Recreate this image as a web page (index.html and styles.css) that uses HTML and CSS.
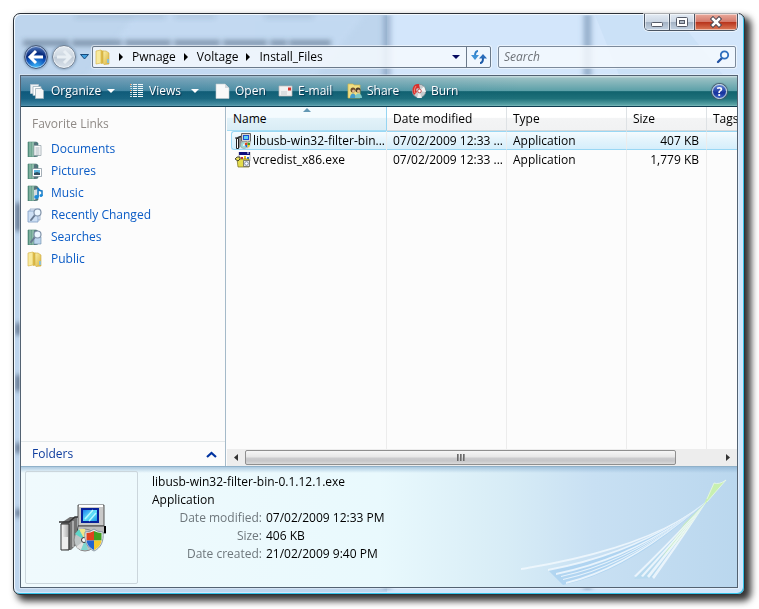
FILE: index.html
```html
<!DOCTYPE html>
<html lang="en">
<head>
<meta charset="utf-8">
<title>Install_Files</title>
<link rel="stylesheet" href="styles.css">
</head>
<body>
<svg class="defs" width="0" height="0" aria-hidden="true">
  <defs>
    <linearGradient id="book" x1="0" x2="1"><stop offset="0" stop-color="#4f8f7c"/><stop offset=".5" stop-color="#7db09b"/><stop offset="1" stop-color="#3f6d78"/></linearGradient>
    <linearGradient id="gold" x1="0" x2="1" y2="1"><stop offset="0" stop-color="#fbf0a8"/><stop offset="1" stop-color="#d9b23c"/></linearGradient>
    <linearGradient id="screen" x1="0" x2="1" y2="1"><stop offset="0" stop-color="#1d7ff0"/><stop offset=".5" stop-color="#5fe0f8"/><stop offset="1" stop-color="#1b9ae8"/></linearGradient>
    <linearGradient id="grey" x1="0" x2="1"><stop offset="0" stop-color="#fff"/><stop offset="1" stop-color="#a8a8a8"/></linearGradient>
    <symbol id="i-book" viewBox="0 0 16 16">
      <path d="M1 1h8l2 1v13l-3 1H1z" fill="url(#book)" stroke="#4b7f73" stroke-width=".6"/>
      <path d="M3 1v14.500M6 1v14.500" stroke="#a9cfc0" stroke-width=".8"/>
      <path d="M7 2l3-1v14l-3 1z" fill="#57717c"/>
    </symbol>
    <symbol id="i-folder" viewBox="0 0 16 16">
      <path d="M1 2l5-1v13l-5 1z" fill="#f8ea9d" stroke="#d8b750" stroke-width=".7"/>
      <path d="M6 1l3 1v12l-3 1z" fill="#dcb947"/>
      <path d="M8 2h3l3 2v11l-5 .500-1-1z" fill="url(#gold)" stroke="#cfa93e" stroke-width=".6"/>
      <path d="M12 10h2v4h-2z" fill="#8fc0cf"/>
    </symbol>
    <symbol id="i-glass" viewBox="0 0 16 16">
      <path d="M8 8l-4 5" stroke="#66788f" stroke-width="2" stroke-linecap="round"/>
      <circle cx="10.500" cy="5.500" r="3.500" fill="#edf7ff" stroke="#8193aa" stroke-width="1.200"/>
    </symbol>
    <symbol id="i-setup" viewBox="0 0 48 48">
      <path d="M20 1h26v21H20z" fill="#c9c9c9" stroke="#555"/>
      <path d="M21 2h24" stroke="#fff" stroke-width="2"/>
      <path d="M23 4h18v15H23z" fill="#07219b"/>
      <path d="M25 6h14v11H25z" fill="url(#screen)"/>
      <path d="M27 15l8-9M31 17l7-8" stroke="#b6f7ff" stroke-width="1.500"/>
      <path d="M20 22h26l2 2v5H19z" fill="#bdbdbd" stroke="#444"/>
      <path d="M47 22v7" stroke="#000" stroke-width="2"/>
      <path d="M3 19l9-6h7v27l-6 6H3z" fill="#717171"/>
      <path d="M1 18h10l6-5h3" stroke="#333" stroke-width="1.500" fill="none"/>
      <path d="M3 20h8v26H3z" fill="url(#grey)" stroke="#333"/>
      <path d="M15 17v26" stroke="#aaa" stroke-width="2"/>
      <path d="M4 33h6v12H4z" fill="#eee"/>
      <circle cx="27" cy="36" r="11" fill="#bfc5c6" stroke="#888"/>
      <path d="M27 36L17 30l4-5z" fill="#5fd5c8"/><path d="M27 36L21 25l6 0z" fill="#efe789"/>
      <path d="M27 36l-9 7 5 3z" fill="#e2e2e2"/><path d="M27 36l-4 10h7z" fill="#7ed7d0"/>
      <circle cx="26" cy="36" r="2.500" fill="#fff" stroke="#333"/>
      <path d="M27 28q6 0 9-3 3 3 9 3c1 9-2 16-9 19-7-3-10-10-9-19z" fill="#e6edf0" stroke="#8d9aa5"/>
      <path d="M28.500 29q4 0 7.500-2v9.500h-7.500z" fill="#e0421e"/><path d="M36 27q4 2 7.500 2v7.500H36z" fill="#3f9f20"/>
      <path d="M28.500 36.500H36V46c-4-2-7-5-7.500-9.500z" fill="#2165d2"/><path d="M36 36.500h7.500C43 41 40 44 36 46z" fill="#f4c92e"/>
    </symbol>
    <symbol id="i-setup-small" viewBox="0 0 16 16">
      <path d="M6.500.500h9v8h-9z" fill="#d4d4d4" stroke="#666"/>
      <path d="M8 2h6v5H8z" fill="#1b4fd0"/><path d="M9 3h4v3H9z" fill="#5fd2f4"/>
      <path d="M1 5l3-2h2v10l-2 2H1z" fill="#666"/><path d="M1.500 5.500h2v10h-2z" fill="#fff" stroke="#222"/><path d="M5 5v9" stroke="#bbb"/>
      <path d="M0 5h3l3-2" stroke="#222" fill="none"/>
      <path d="M6 8.500h10v2H6z" fill="#bbb"/>
      <circle cx="9" cy="12" r="3.500" fill="#9edbd6" stroke="#999" stroke-width=".6"/><circle cx="9" cy="12" r="1" fill="#fff"/>
      <path d="M9.500 9.500q2 0 3-1 1 1 3 1c0 3-1 5-3 6-2-1-3-3-3-6z" fill="#fff" stroke="#bbb" stroke-width=".4"/>
      <path d="M10 10l2.500-.8V12H10z" fill="#e0421e"/><path d="M12.500 9.200L15 10v2h-2.500z" fill="#3f9f20"/><path d="M10 12h2.500v3Q10 14 10 12z" fill="#2165d2"/><path d="M12.500 12H15q0 2-2.500 3z" fill="#f4c92e"/>
    </symbol>
    <symbol id="i-redist" viewBox="0 0 16 16">
      <path d="M4 0h11v9H4z" fill="#fff" stroke="#777" stroke-width=".5"/><path d="M4 0h11v3H4z" fill="#10107c"/>
      <path d="M12 1h2" stroke="#fff"/><path d="M6 5h2v2H6z" fill="#d03030"/><path d="M9 4h2v3H9z" fill="#e2bd16"/><path d="M12 5h2v2h-2z" fill="#3078c8"/>
      <path d="M2 7h12v8H3z" fill="#e4dc4c" stroke="#756c19" stroke-width=".7"/>
      <path d="M0 7l2-2h3v2l-2 2z" fill="#e9e15a" stroke="#222" stroke-width=".8"/>
      <path d="M8.500 8.500h6v6h-6z" fill="#e8e8e8" stroke="#555" stroke-width=".7"/><circle cx="11.500" cy="11.500" r="1.800" fill="#fff" stroke="#679" stroke-width=".8"/>
    </symbol>
  </defs>
</svg>

<main class="window">
  <svg class="glass" aria-hidden="true">
    <defs><filter id="soft" x="-20%" y="-100%" width="140%" height="300%"><feGaussianBlur stdDeviation="2.500"/></filter>
    <filter id="soft2" x="-300%" y="-5%" width="700%" height="110%"><feGaussianBlur stdDeviation="3 1"/></filter></defs>
    <rect width="372" height="100%" fill="#a9c4df" opacity=".5"/>
    <path d="M120 0h230l-60 75H60z" fill="#c6dcf4" opacity=".6" filter="url(#soft)"/>
    <g filter="url(#soft)" fill="#41566e">
      <path d="M8 25h46v6H8zM57 25h50v6H57zM110 25h46v6h-46zM159 25h46v6h-46zM208 25h44v6h-44zM255 25h17v6h-17zM274 25h42v6h-42z" opacity=".5"/>
      <path d="M60 0h90v3H60zM160 0h40v3h-40zM250 0h48v3h-48z" opacity=".2"/>
      <path d="M0 188h7v28H0zM0 308h7v12H0zM0 360h7v16H0zM0 428h7v10H0zM0 494h7v8H0z" opacity=".7"/>
    </g>
    <g filter="url(#soft2)" fill="#5b7b9e"><path d="M370 0h4v575h-4z" opacity=".8"/><path d="M570 0h5v575h-5z" opacity=".8"/></g>
    <path d="M580 0h80l60 75H610z" fill="#c3dbf3" opacity=".5"/>
  </svg>

  <header class="titlebar">
    <div class="caption">
      <button class="cap" aria-label="Minimize"><svg width="14" height="14" viewBox="0 0 14 14"><rect x="1.500" y="7.500" width="11" height="4" rx="1" fill="#fff" stroke="#555b68"/></svg></button>
      <button class="cap" aria-label="Maximize"><svg width="14" height="14" viewBox="0 0 14 14"><rect x="1.500" y="2.500" width="11" height="9" rx="1" fill="#fff" stroke="#555b68"/><rect x="4.500" y="5.500" width="5" height="3" fill="#aeb8c4" stroke="#555b68"/></svg></button>
      <button class="cap close" aria-label="Close"><svg width="14" height="14" viewBox="0 0 14 14"><path d="M4 4l6 6M10 4l-6 6" stroke="#4f4b55" stroke-width="4.500" stroke-linecap="square"/><path d="M4 4l6 6M10 4l-6 6" stroke="#fff" stroke-width="2.500" stroke-linecap="square"/></svg></button>
    </div>
  </header>

  <div class="navrow">
    <button class="round back" aria-label="Back"><svg width="18" height="18" viewBox="0 0 18 18"><path d="M9 3L3 9l6 6M4 9h12" fill="none" stroke="#fff" stroke-width="3"/></svg></button>
    <button class="round forward" aria-label="Forward"><svg width="18" height="18" viewBox="0 0 18 18"><path d="M9 3l6 6-6 6M14 9H2" fill="none" stroke="#e9eff4" stroke-width="3"/></svg></button>
    <button class="recent" aria-label="Recent pages"><svg width="9" height="6" viewBox="0 0 9 6"><path d="M.5.500h8L4.500 5z" fill="#3fa0e0" stroke="#17497c"/></svg></button>
    <nav class="address" aria-label="Address">
      <svg class="icon" aria-hidden="true"><use href="#i-folder"/></svg>
      <span class="sep"></span><a href="#">Pwnage</a>
      <span class="sep"></span><a href="#">Voltage</a>
      <span class="sep"></span><a href="#">Install_Files</a>
      <button class="drop" aria-label="Previous locations"><svg width="8" height="4" viewBox="0 0 8 4"><path d="M0 0h8L4 4z" fill="#050a60"/></svg></button>
      <button class="refresh" aria-label="Refresh"><svg width="16" height="14" viewBox="0 0 16 14"><path d="M7 1Q4 1 4 6" fill="none" stroke="#2f7fc8" stroke-width="2"/><path d="M0 5h8L4 10z" fill="#3f92d6"/><path d="M9 13q3 0 3-5" fill="none" stroke="#1d5ba8" stroke-width="2"/><path d="M8 8.500h8L12 4z" fill="#2a6cba"/></svg></button>
    </nav>
    <div class="search">
      <input type="search" placeholder="Search" aria-label="Search">
      <svg width="14" height="14" viewBox="0 0 14 14" aria-hidden="true"><path d="M6 8l-4 4" stroke="#2353a3" stroke-width="2.400" stroke-linecap="round"/><circle cx="8.500" cy="5" r="3.700" fill="#f4faff" stroke="#2e6ebd" stroke-width="1.800"/></svg>
    </div>
  </div>

  <div class="client">
    <div class="toolbar" role="toolbar">
      <button class="tool w-organize"><svg class="icon" viewBox="0 0 16 16"><path d="M1.500 1.500h8v9h-8z" fill="#eef1f4" stroke="#b9c7d0" stroke-width=".8"/><path d="M4 3.500h8v9H4z" fill="#fff" stroke="#9fb2bd" stroke-width=".8"/><path d="M6.500 5.500h6l2 2v8h-8z" fill="#f6f6f6" stroke="#9fb2bd" stroke-width=".8"/></svg>Organize<span class="caret"></span></button>
      <button class="tool w-views"><svg class="icon" viewBox="0 0 16 16"><path d="M1 1.500h2M1 3.500h2M1 5.500h2M1 7.500h2M1 9.500h2M1 11.500h2M1 13.500h2" stroke="#d6dfdc"/><path d="M1 1.500h1M1 7.500h1" stroke="#f08a50"/><path d="M1 5.500h1M1 11.500h1" stroke="#75c7ee"/><path d="M4 1.500h4M4 3.500h4M4 5.500h4M4 7.500h4M4 9.500h4M4 11.500h4M4 13.500h4M9 1.500h5M9 3.500h5M9 5.500h5M9 7.500h5M9 9.500h5M9 11.500h5M9 13.500h5" stroke="#f2f7f8"/></svg>Views<span class="caret"></span></button>
      <button class="tool w-open"><svg class="icon" viewBox="0 0 16 16"><path d="M1 1h9l4 4v10.500H1z" fill="#f9f9f9" stroke="#bfc9ce" stroke-width=".6"/><path d="M10 1v4h4z" fill="#d3d8dc"/></svg>Open</button>
      <button class="tool w-mail"><svg class="icon" viewBox="0 0 16 16"><path d="M1 3h13v10H1z" fill="#f2f2f2" stroke="#c0b8b8" stroke-width=".7"/><path d="M10 4.500h3v3h-3z" fill="#d8322c"/><path d="M3 9h6M3 11h6" stroke="#c5cbd0"/></svg>E-mail</button>
      <button class="tool w-share"><svg class="icon" viewBox="0 0 16 16"><path d="M1 1h5l1 1h6v13H1z" fill="#f0de83" stroke="#cfb44b" stroke-width=".7"/><circle cx="6" cy="7" r="2.500" fill="#6d4b2a"/><circle cx="11" cy="7" r="2.500" fill="#4d3a28"/><circle cx="6.500" cy="8" r="1.500" fill="#e3b98f"/><circle cx="11.500" cy="8" r="1.500" fill="#e3b98f"/><path d="M3 15c0-6 6-6 6 0z" fill="#459bcb"/><path d="M8 15c0-6 7-6 7 0z" fill="#7dc7c7"/></svg>Share</button>
      <button class="tool"><svg class="icon" viewBox="0 0 16 16"><circle cx="8" cy="8" r="6.800" fill="#c7cbce" stroke="#76858c" stroke-width=".7"/><path d="M8 8l5-4.500L15 9z" fill="#f5f5f5"/><path d="M8 8l-2 7 5 0z" fill="#efefef"/><path d="M8 1C2 0 0 7 3 12l3-3c-2-3 0-5 3-3z" fill="#d8302c"/><path d="M5 3c-2 3-2 5-1 7" stroke="#f58c78" fill="none"/><circle cx="8.500" cy="8" r="1.800" fill="#fff" stroke="#b33" stroke-width=".8"/></svg>Burn</button>
      <button class="help" aria-label="Help"><span>?</span></button>
    </div>

    <div class="content">
      <aside class="sidebar">
        <h2>Favorite Links</h2>
        <ul>
          <li><a href="#"><svg class="icon" viewBox="0 0 16 16"><use href="#i-book"/><path d="M7 4.500h7v10H7z" fill="#fafafa" stroke="#8d9ba3" stroke-width=".7"/><path d="M8.500 7h4M8.500 9h4M8.500 11h4M8.500 13h4" stroke="#96a4ae" stroke-width=".8"/></svg>Documents</a></li>
          <li><a href="#"><svg class="icon" viewBox="0 0 16 16"><use href="#i-book"/><path d="M5.500 5.500h9v8h-9z" fill="#fff" stroke="#7e8c98" stroke-width=".7"/><path d="M7 7h6v5H7z" fill="#5bb4df"/><path d="M7 10l3-1 3 1v2H7z" fill="#314f63"/></svg>Pictures</a></li>
          <li><a href="#"><svg class="icon" viewBox="0 0 16 16"><use href="#i-book"/><path d="M7 5l4-1v9l-4 2z" fill="#d5dde0"/><path d="M11 12V3q1 3 4 3v5" fill="none" stroke="#1679c4" stroke-width="1.500"/><ellipse cx="9.500" cy="12" rx="2.300" ry="2" fill="#1c8ad8"/><circle cx="14" cy="10.500" r="1.500" fill="#1c8ad8"/></svg>Music</a></li>
          <li><a href="#"><svg class="icon" viewBox="0 0 16 16"><path d="M3 2h10v11H3z" fill="#e4edf8" stroke="#93a9c7" stroke-width=".8"/><path d="M1 4h10v11H1z" fill="#cddff4" stroke="#7f9cc4" stroke-width=".8"/><use href="#i-glass"/></svg>Recently Changed</a></li>
          <li><a href="#"><svg class="icon" viewBox="0 0 16 16"><use href="#i-book"/><path d="M7 8h7v7H7z" fill="#bcd5ed" stroke="#6989a8" stroke-width=".6"/><use href="#i-glass"/></svg>Searches</a></li>
          <li><a href="#"><svg class="icon"><use href="#i-folder"/></svg>Public</a></li>
        </ul>
        <button class="folders">Folders<svg width="11" height="7" viewBox="0 0 11 7"><path d="M1 6l4.500-4L10 6" fill="none" stroke="#0033a0" stroke-width="2.200"/></svg></button>
      </aside>

      <section class="files">
        <div class="listing">
          <table>
            <colgroup><col class="c-name"><col class="c-date"><col class="c-type"><col class="c-size"><col></colgroup>
            <thead><tr><th class="sorted" aria-sort="ascending">Name</th><th>Date modified</th><th>Type</th><th>Size</th><th>Tags</th></tr></thead>
            <tbody>
              <tr class="selected"><td class="name"><div><svg class="icon"><use href="#i-setup-small"/></svg>libusb-win32-filter-bin...</div></td><td>07/02/2009 12:33 ...</td><td>Application</td><td class="num">407 KB</td><td></td></tr>
              <tr><td class="name"><div><svg class="icon"><use href="#i-redist"/></svg>vcredist_x86.exe</div></td><td>07/02/2009 12:33 ...</td><td>Application</td><td class="num">1,779 KB</td><td></td></tr>
              <tr class="rest"><td></td><td></td><td></td><td></td><td></td></tr>
            </tbody>
          </table>
        </div>
        <div class="scrollbar">
          <button aria-label="Scroll left"><svg width="4" height="7" viewBox="0 0 4 7"><path d="M4 0v7L0 3.500z" fill="#333"/></svg></button>
          <div class="track"><div class="thumb"><i></i><i></i><i></i></div></div>
          <button aria-label="Scroll right"><svg width="4" height="7" viewBox="0 0 4 7"><path d="M0 0v7l4-3.500z" fill="#333"/></svg></button>
        </div>
      </section>
    </div>

    <footer class="details">
      <svg class="swoosh" width="218" height="115" viewBox="0 0 218 115" aria-hidden="true">
        <path d="M29 98Q123 80 188 29Q112 99 44 113z" fill="#a5cff0" opacity=".7"/>
        <path d="M115 107Q160 62 188 29L134 106z" fill="#b3d9ee" opacity=".7"/>
        <path d="M165 52L188 29L165 63L142 87z" fill="#c5efb4" opacity=".8"/>
        <path d="M195 11q5 2 12-3l-19 22-4 4z" fill="#c8f0b0"/>
        <path d="M188 27l7-16q5 2 12-3l-19 22" fill="none" stroke="#e9f8ea" stroke-width=".8"/>
        <g fill="#f2f9fe" opacity=".85">
          <path d="M2 96Q133 75 188 29Q134 77 2 98z"/>
          <path d="M29 97Q123 79 188 29Q124 81 29 99z"/>
          <path d="M37 101Q119 84 188 29Q120 86 37 103z"/>
          <path d="M42 104Q116 88 188 29Q117 89 42 105z"/>
          <path d="M44 107Q113 92 188 29Q114 93 44 108z"/>
          <path d="M47 110Q110 95 188 29Q111 97 47 112z"/>
          <path d="M115 104Q160 60 188 29Q161 62 117 105z"/>
          <path d="M122 104Q161 61 188 29Q163 62 124 105z"/>
          <path d="M128 104Q163 61 188 29Q165 62 130 106z"/>
          <path d="M133 105Q165 61 188 29Q167 62 135 107z"/>
        </g>
      </svg>
      <div class="thumbnail"><svg width="48" height="48" aria-hidden="true"><use href="#i-setup"/></svg></div>
      <div class="info">
        <p>libusb-win32-filter-bin-0.1.12.1.exe</p>
        <p>Application</p>
        <dl>
          <dt>Date modified:</dt><dd>07/02/2009 12:33 PM</dd>
          <dt>Size:</dt><dd>406 KB</dd>
          <dt>Date created:</dt><dd>21/02/2009 9:40 PM</dd>
        </dl>
      </div>
    </footer>
  </div>
</main>
</body>
</html>
```

FILE: styles.css
```css
* { box-sizing: border-box; }
body {
  margin: 0;
  padding: 13px 14px 14px 13px;
  min-height: 100vh;
  display: flex;
  background: #fff;
  color: #000;
  font: 12px/18px "Open Sans", "Noto Sans", sans-serif;
}
button { font: inherit; color: inherit; border: 0; padding: 0; margin: 0; background: none; }
a { color: inherit; text-decoration: none; }
svg { flex: none; }
.defs { position: absolute; }
.icon { width: 16px; height: 16px; }

.window {
  position: relative;
  flex: 1;
  min-width: 0;
  display: flex;
  flex-direction: column;
  padding: 0 6px;
  border: 1px solid #2b3138;
  border-radius: 7px;
  background: #d3e6fb;
  box-shadow: inset 1px 1px #f4faff, inset -1px -1px #35c4ea, 5px 5px 7px 1px rgba(0, 0, 0, .8);
}
.glass { position: absolute; inset: 1px; width: calc(100% - 3px); height: calc(100% - 3px); border-radius: 6px; }
.titlebar, .navrow, .client { position: relative; }

.titlebar { height: 31px; display: flex; justify-content: flex-end; align-items: flex-start; }
.caption { display: flex; border: 1px solid #4b5664; border-top: 0; border-radius: 0 0 5px 5px; overflow: hidden; box-shadow: 0 0 0 1px rgba(255, 255, 255, .6); }
.cap {
  width: 25px; height: 16px;
  display: flex; align-items: center; justify-content: center;
  border-right: 1px solid #4b5664;
  background: linear-gradient(#e3ebf4, #ccd7e4 48%, #a3b2c4 52%, #c5d4e4);
  box-shadow: inset 0 0 0 1px rgba(255, 255, 255, .5);
}
.cap.close { width: 42px; border-right: 0; background: linear-gradient(#e9aa9c, #d4796a 48%, #b8341c 52%, #dc7a58); }

.navrow { display: flex; align-items: center; height: 24px; margin-bottom: 6px; padding: 0 2px 0 4px; }
.round { width: 24px; height: 24px; border-radius: 50%; display: flex; align-items: center; justify-content: center; margin-right: 4px; border: 1px solid #4a5c78; box-shadow: 0 0 2px 1px rgba(120, 150, 180, .6), inset 0 0 0 1px rgba(255, 255, 255, .5); }
.back { background: radial-gradient(circle at 50% 100%, #3fc0ff 0, #0c50b8 45%, #06297c 60%, #7aa3dc 100%); }
.forward { border-color: #6f7f92; background: linear-gradient(#e5ebf1, #ccd6e0 50%, #c0cbd7 52%, #dbe3ec); }
.recent { width: 9px; margin-right: 3px; display: flex; }
.address { flex: 11; display: flex; align-items: center; height: 22px; padding-left: 2px; border: 1px solid #6b7a8b; border-radius: 2px; background: rgba(247, 250, 254, .82); white-space: nowrap; box-shadow: 0 0 0 1px rgba(255, 255, 255, .5); }
.address .sep { margin: 0 9px 0 8px; border: solid transparent; border-width: 4px 0 4px 4px; border-left-color: #000; }
.drop { margin-left: auto; width: 20px; align-self: stretch; }
.drop svg { display: block; margin: auto; }
.refresh { width: 24px; align-self: stretch; display: flex; align-items: center; justify-content: center; border-left: 1px solid #6b7a8b; }
.search { flex: 0 1 238px; margin-left: 7px; height: 22px; display: flex; align-items: center; padding: 0 5px; border: 1px solid #7c8a9b; border-radius: 2px; background: rgba(247, 250, 254, .82); box-shadow: 0 0 0 1px rgba(255, 255, 255, .5); }
.search input { flex: 1; min-width: 0; border: 0; padding: 0; background: none; font: inherit; outline: 0; }
.search input::placeholder { color: #6d7278; font-style: italic; opacity: 1; }

.client { flex: 1; display: flex; flex-direction: column; min-width: 0; margin-bottom: 6px; border: 1px solid #536272; background: #fcfcfc; box-shadow: 0 0 0 1px rgba(255, 255, 255, .35); }
.toolbar {
  display: flex; align-items: center; height: 31px; padding: 0 10px 0 8px;
  color: #fff; text-shadow: 1px 1px 1px #0b3550;
  border-bottom: 1px solid #0d3c50;
  background: linear-gradient(90deg, rgba(10, 70, 150, .35), rgba(10, 90, 110, 0) 70%), linear-gradient(#d0e1e3, #98bfc3 8%, #5ba0a8 50%, #11636e 52%, #1e7079 75%, #5aa3a6 96%, #83bcbd);
}
.tool { display: flex; align-items: center; gap: 4px; margin-right: 1px; text-shadow: inherit; white-space: nowrap; }
.w-organize { width: 99px; gap: 6px; }
.w-views { width: 85px; }
.w-open { width: 62px; }
.w-mail { width: 68px; }
.w-share { width: 63px; }
.caret { border: solid transparent; border-width: 4px 4px 0; border-top-color: #fff; }
.w-organize .caret, .w-views .caret { margin-left: auto; margin-right: 15px; }
.help { margin-left: auto; width: 15px; height: 15px; border-radius: 50%; border: 1px solid #d2dcea; background: linear-gradient(#6285d4, #16319c 60%, #3c63c4); font-weight: bold; line-height: 13px; color: #fff; box-shadow: 0 0 1px 1px #45576e; }

.content { flex: 1; display: flex; min-height: 0; }
.sidebar { flex: none; width: 205px; display: flex; flex-direction: column; border-right: 1px solid #a5bac9; background: #fcfcfc; }
.sidebar h2 { margin: 8px 0 5px 11px; font-size: 12px; line-height: 18px; font-weight: normal; color: #8f8a86; }
.sidebar ul { list-style: none; margin: 0; padding: 0 0 0 6px; flex: 1; }
.sidebar li a { display: flex; align-items: center; gap: 8px; height: 22px; color: #0b5cc6; }
.folders { display: flex; align-items: center; justify-content: space-between; height: 25px; padding: 0 8px 0 11px; border-top: 1px solid #e3e8ea; color: #0f3d9e; }

.files { flex: 1; min-width: 0; display: flex; flex-direction: column; padding-left: 1px; }
.listing { flex: 1; overflow: hidden; display: flex; }
table { table-layout: fixed; width: 100%; min-height: 300px; border-collapse: separate; border-spacing: 0; }
.c-name { width: 160px; }
.c-date, .c-type { width: 120px; }
.c-size { width: 80px; }
th, td { padding: 0 6px; font-weight: normal; text-align: left; white-space: nowrap; border-right: 1px solid #ececec; }
th:last-child, td:last-child { border-right: 0; padding-right: 0; }
th { height: 24px; border-bottom: 1px solid #d5d9dc; border-right-color: #dee2e5; background: linear-gradient(#fff 45%, #f3f4f5 50%, #f1f2f3); }
th.sorted { position: relative; border-bottom-color: #a6dcf3; border-right-color: #96d5f2; background: linear-gradient(#f4fbfe 45%, #e2f2f9 50%, #d9ecf5); }
th.sorted::after { content: ""; position: absolute; top: 1px; left: 50%; margin-left: -4px; border: solid transparent; border-width: 0 4px 4px; border-bottom-color: #6398b4; }
td { height: 19px; line-height: 17px; }
td.name { padding: 0 0 0 4px; }
td.name div { display: flex; align-items: center; gap: 2px; height: 19px; padding-left: 4px; }
td.num { text-align: right; padding-right: 7px; }
.selected td:not(.name), .selected .name div { background: linear-gradient(#f5fbfe, #e4f4fc 45%, #d5eefb); border-top: 1px solid #99d7f4; border-bottom: 1px solid #99d7f4; }
.selected .name div { border-left: 1px solid #99d7f4; border-radius: 3px 0 0 3px; padding-left: 3px; }
.rest td { height: auto; }

.scrollbar { display: flex; height: 17px; background: #ededed; }
.scrollbar button { width: 18px; display: flex; align-items: center; justify-content: center; }
.track { flex: 1; min-width: 0; display: flex; }
.thumb { width: 91%; height: 15px; margin-top: 1px; display: flex; align-items: center; justify-content: center; gap: 1px; border: 1px solid #8f8f8f; border-radius: 2px; background: linear-gradient(#f6f6f6, #e6e6e6 48%, #cdcdcf 52%, #c6c6c8 75%, #dadada); }
.thumb i { width: 2px; height: 7px; background: linear-gradient(90deg, #555, #aaa); }

.details { position: relative; display: flex; padding: 4px 4px 3px; border-top: 1px solid #90b1c9; background: linear-gradient(rgba(130, 170, 205, .6), rgba(180, 210, 235, 0) 6px), linear-gradient(90deg, #f0fafd, #e9f9fd 50%, #d7ecf6 68%, #c8e0f3 80%, #bad7ee); }
.swoosh { position: absolute; right: 0; bottom: 0; }
.thumbnail { flex: none; width: 113px; height: 113px; display: flex; align-items: center; justify-content: center; border: 1px solid #cbd6dc; border-radius: 2px; }
.info { position: relative; padding: 2px 0 0 14px; min-width: 0; }
.info p, .info dl { margin: 0; }
.info dl { display: grid; grid-template-columns: 110px auto; column-gap: 4px; }
.info dt { text-align: right; color: #6e777c; }
.info dd { margin: 0; }
```
